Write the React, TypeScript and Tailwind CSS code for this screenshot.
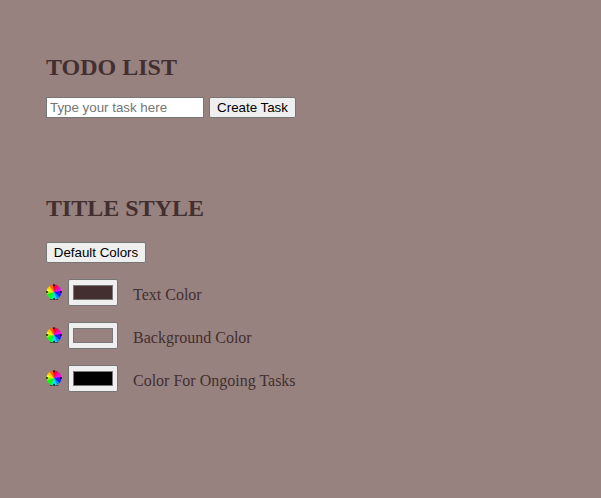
import React from "react";

const SLICES = [
  "#ff0000", "#ff0055", "#ff00bb", "#ff00ff", "#4400ff", "#0022ff",
  "#0088ff", "#00ddff", "#00ff99", "#00ff22", "#11ff00", "#88ff00",
  "#ffff00", "#ffcc00", "#ff6600",
];

function point(index: number) {
  const angle = (index / SLICES.length) * Math.PI * 2 - Math.PI / 2 - 0.2;
  return `${8 + 7.3 * Math.cos(angle)} ${8 + 7.3 * Math.sin(angle)}`;
}

function ColorWheel() {
  return (
    <svg className="mt-[5px] h-4 w-4 shrink-0" viewBox="0 0 16 16" aria-hidden="true">
      <ellipse cx="8" cy="15.4" rx="4.6" ry="0.6" fill="#302525" opacity="0.75" />
      {SLICES.map((color, i) => (
        <path
          key={color}
          d={`M8 8L${point(i)}A7.3 7.3 0 0 1 ${point(i + 1)}Z`}
          fill={color}
          stroke={color}
          strokeWidth="0.2"
        />
      ))}
      <g fill="#111" opacity="0.9">
        <circle cx="8" cy="1.2" r="1" />
        <circle cx="15" cy="8" r="1" />
        <circle cx="8" cy="14.7" r="1" />
        <circle cx="1" cy="8" r="1" />
      </g>
    </svg>
  );
}

function Button({ children, className }: { children: React.ReactNode; className: string }) {
  return (
    <button
      className={`flex h-[21px] items-center justify-center whitespace-nowrap rounded-[2px] border border-[#767676] bg-[#efefef] font-['Liberation_Sans',Arial,sans-serif] text-[13.333px] leading-[15px] text-black ${className}`}
    >
      {children}
    </button>
  );
}

function ColorRow({ label, swatch }: { label: string; swatch: string }) {
  return (
    <div className="flex h-[27px] items-start">
      <ColorWheel />
      <button
        aria-label={label}
        className="ml-1.5 flex h-[27px] w-[50px] items-center justify-center rounded-[2px] border border-[#767676] bg-[#efefef]"
      >
        <span className={`h-[15px] w-10 border border-[#777777] ${swatch}`} />
      </button>
      <span className="ml-[15px] mt-[7px] text-base leading-[18px]">{label}</span>
    </div>
  );
}

export default function App() {
  return (
    <main className="h-[498px] w-full bg-[#978280] pl-[46px] pt-[53px] font-['Liberation_Serif','Times_New_Roman',serif] text-[#432f2f]">
      <h2 className="text-2xl font-bold leading-7">TODO LIST</h2>
      <div className="mt-4 flex gap-[5px]">
        <input
          placeholder="Type your task here"
          className="h-[21px] w-[158px] border border-[#767676] bg-white px-[3px] font-['Liberation_Sans',Arial,sans-serif] text-[13.333px] leading-[15px] placeholder:text-[#757575]"
        />
        <Button className="w-[87px]">Create Task</Button>
      </div>
      <h2 className="mt-[76px] text-2xl font-bold leading-7">TITLE STYLE</h2>
      <Button className="mt-5 w-[100px]">Default Colors</Button>
      <div className="mt-4 flex flex-col gap-4">
        <ColorRow label="Text Color" swatch="bg-[#432f2f]" />
        <ColorRow label="Background Color" swatch="bg-[#978280]" />
        <ColorRow label="Color For Ongoing Tasks" swatch="bg-black" />
      </div>
    </main>
  );
}
